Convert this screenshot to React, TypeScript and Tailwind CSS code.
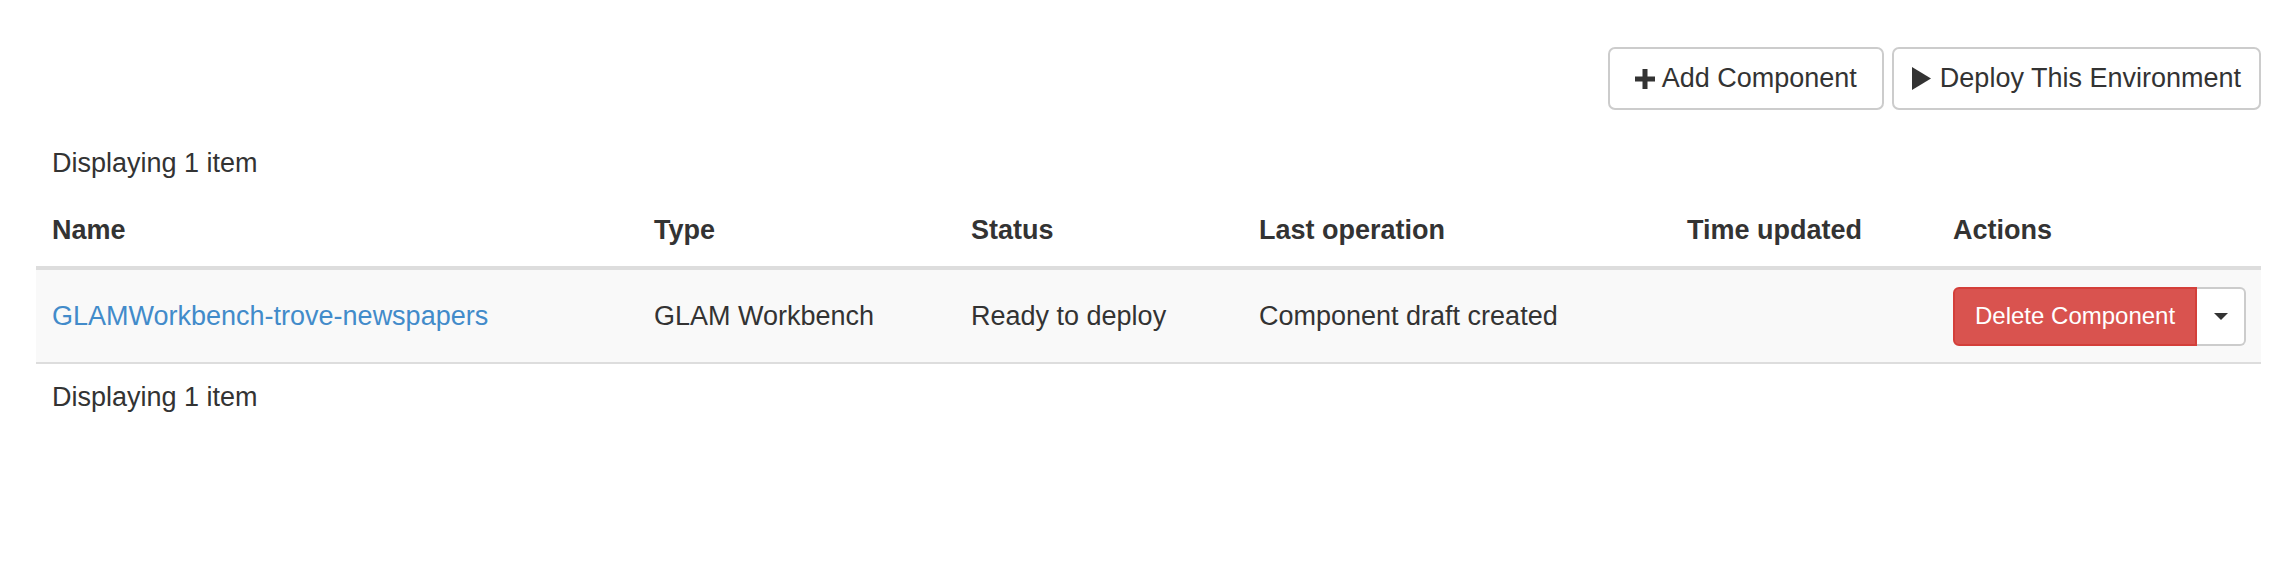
import React from 'react';

const columns = [
  { label: 'Name', width: 'w-[602px]' },
  { label: 'Type', width: 'w-[317px]' },
  { label: 'Status', width: 'w-[288px]' },
  { label: 'Last operation', width: 'w-[428px]' },
  { label: 'Time updated', width: 'w-[266px]' },
  { label: 'Actions', width: 'w-[324px]' },
];

function PlusIcon() {
  return (
    <svg width="20" height="20" viewBox="0 0 20 20" className="shrink-0">
      <rect x="7.5" y="0" width="5" height="20" fill="#333" />
      <rect x="0" y="7.5" width="20" height="5" fill="#333" />
    </svg>
  );
}

function PlayIcon() {
  return (
    <svg width="20" height="23" viewBox="0 0 20 23" className="shrink-0">
      <path d="M0 0 L19 11.5 L0 23 Z" fill="#333" />
    </svg>
  );
}

function Caret() {
  return (
    <svg width="14" height="7" viewBox="0 0 14 7">
      <path d="M0 0 L14 0 L7 7 Z" fill="#333" />
    </svg>
  );
}

export default function App() {
  return (
    <div className="min-h-screen bg-white pl-[36px] pr-[19px] pt-[47px] font-['Liberation_Sans',Arial,sans-serif] text-[27px] text-[#333]">
      {/* Toolbar */}
      <div className="flex justify-end gap-[8px]">
        <button className="flex h-[63px] items-center gap-[7px] whitespace-nowrap rounded-[7px] border-2 border-[#ccc] bg-white px-[25px] text-[#333]">
          <PlusIcon />
          <span>Add Component</span>
        </button>
        <button className="flex h-[63px] items-center gap-[8px] whitespace-nowrap rounded-[7px] border-2 border-[#ccc] bg-white px-[18px] text-[#333]">
          <PlayIcon />
          <span>Deploy This Environment</span>
        </button>
      </div>

      <div className="mt-[33px] pl-[16px] leading-[40px]">Displaying 1 item</div>

      {/* Table */}
      <div className="mt-[11px]">
        <div className="flex border-b-4 border-[#ddd]">
          {columns.map((c) => (
            <div key={c.label} className={`${c.width} shrink-0 px-[16px] py-[16px] font-bold leading-[40px]`}>
              {c.label}
            </div>
          ))}
        </div>
        <div className="flex h-[94px] items-center border-b-2 border-[#ddd] bg-[#f9f9f9]">
          <div className="w-[602px] shrink-0 px-[16px]">
            <a href="#" className="text-[#428bca]">GLAMWorkbench-trove-newspapers</a>
          </div>
          <div className="w-[317px] shrink-0 px-[16px]">GLAM Workbench</div>
          <div className="w-[288px] shrink-0 px-[16px]">Ready to deploy</div>
          <div className="w-[428px] shrink-0 px-[16px]">Component draft created</div>
          <div className="w-[266px] shrink-0 px-[16px]"></div>
          <div className="flex w-[324px] shrink-0 px-[16px]">
            <button className="h-[59px] shrink-0 whitespace-nowrap rounded-l-[6px] border-2 border-[#d43f3a] bg-[#d9534f] px-[20px] text-[24px] text-white">
              Delete Component
            </button>
            <button className="flex h-[59px] w-[49px] shrink-0 items-center justify-center rounded-r-[6px] border-2 border-l-0 border-[#ccc] bg-white">
              <Caret />
            </button>
          </div>
        </div>
      </div>

      <div className="mt-[13px] pl-[16px] leading-[40px]">Displaying 1 item</div>
    </div>
  );
}
